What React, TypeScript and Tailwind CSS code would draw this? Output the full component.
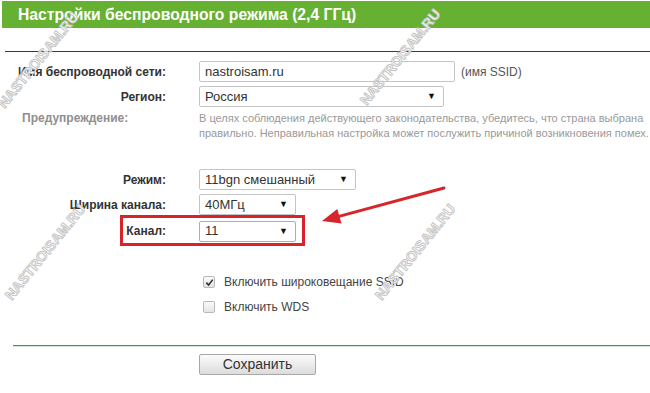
import React from "react";

function Select({ value, w, focus }: { value: string; w: string; focus?: boolean }) {
  return (
    <div
      className={`${w} h-[21px] flex items-center justify-between bg-white border rounded-[2px] pl-[5px] pr-[7px] text-[13px] text-[#333] ${
        focus ? "border-[#8fb3dd]" : "border-[#c4c4c4]"
      }`}
    >
      <span>{value}</span>
      <span className="text-[9px] text-[#111] leading-none">▼</span>
    </div>
  );
}

function Row({ label, children, className = "" }: { label: string; children: React.ReactNode; className?: string }) {
  return (
    <div className={`flex items-center ${className}`}>
      <div className="w-[166px] shrink-0 text-right font-bold text-[12px] text-[#333] whitespace-nowrap">{label}</div>
      <div className="ml-[33px] flex items-center">{children}</div>
    </div>
  );
}

function Check({ checked, label, className = "" }: { checked?: boolean; label: string; className?: string }) {
  return (
    <div className={`flex items-center h-[20px] ${className}`}>
      <div className="ml-[203px] w-[12px] h-[12px] rounded-[2px] border border-[#b9b9b9] bg-gradient-to-b from-[#fafafa] to-[#e4e4e4] flex items-center justify-center">
        {checked && (
          <svg width="9" height="9" viewBox="0 0 10 10">
            <path d="M1.5 5.2 L4 7.8 L8.6 1.8" fill="none" stroke="#333" strokeWidth="1.8" />
          </svg>
        )}
      </div>
      <span className="ml-[9px] text-[12px] text-[#444]">{label}</span>
    </div>
  );
}

function Watermark({ x, y }: { x: number; y: number }) {
  return (
    <div
      className="absolute -translate-x-1/2 -translate-y-1/2 -rotate-[51deg] whitespace-nowrap font-bold text-[14px] leading-none text-white [-webkit-text-stroke:1px_#c6c6c6] pointer-events-none"
      style={{ left: x, top: y }}
    >
      NASTROISAM.RU
    </div>
  );
}

export default function App() {
  return (
    <div className="relative w-[650px] h-[393px] overflow-hidden bg-white font-['Liberation_Sans',Arial,sans-serif]">
      <div className="ml-[2px] mt-px h-[27px] bg-[#66b032] flex items-center pl-[16px] text-white font-bold text-[15.7px]">
        Настройки беспроводного режима (2,4 ГГц)
      </div>
      <div className="ml-[5px] mt-[23px] h-px bg-[#2f4237]"></div>

      <Row label="Имя беспроводной сети:" className="mt-[9px] h-[21px]">
        <div className="w-[256px] h-[21px] flex items-center bg-white border border-[#c4c4c4] rounded-[2px] pl-[5px] text-[13px] text-[#333]">
          nastroisam.ru
        </div>
        <span className="ml-[6px] text-[12px] text-[#555]">(имя SSID)</span>
      </Row>
      <Row label="Регион:" className="mt-[4px] h-[21px]">
        <Select value="Россия" w="w-[245px]" />
      </Row>
      <div className="flex mt-[4px] leading-[15px]">
        <div className="w-[199px] shrink-0 pl-[22px] font-bold text-[12px] text-[#8f8f8f]">Предупреждение:</div>
        <div className="text-[#999] whitespace-nowrap text-[11px]">
          В целях соблюдения действующего законодательства, убедитесь, что страна выбрана
          <br />
          правильно. Неправильная настройка может послужить причиной возникновения помех.
        </div>
      </div>

      <Row label="Режим:" className="mt-[28px] h-[21px]">
        <Select value="11bgn смешанный" w="w-[157px]" />
      </Row>
      <Row label="Ширина канала:" className="mt-[4px] h-[21px]">
        <Select value="40МГц" w="w-[97px]" />
      </Row>
      <Row label="Канал:" className="mt-[5px] h-[22px]">
        <div className="h-[22px] flex items-center">
          <Select value="11" w="w-[97px]" focus />
        </div>
      </Row>

      <Check checked label="Включить широковещание SSID" className="mt-[30px]" />
      <Check label="Включить WDS" className="mt-[5px]" />

      <div className="ml-[13px] mt-[28px] h-px bg-[#4a8a5d]"></div>
      <div className="ml-[13px] h-px bg-[#d3ecd9]"></div>

      <div className="ml-[199px] mt-[7px] w-[117px] h-[21px] flex items-center justify-center border border-[#a8a8a8] rounded-[2px] bg-gradient-to-b from-[#fbfbfb] to-[#dcdcdc] text-[14px] text-[#333]">
        Сохранить
      </div>

      {/* annotation: red frame */}
      <div className="absolute left-[120px] top-[215px] w-[185px] h-[31px] border-[3px] border-[#d8232a]"></div>

      {/* annotation: red arrow */}
      <svg className="absolute left-0 top-0" width="650" height="393" viewBox="0 0 650 393">
        <line x1="444" y1="188" x2="338" y2="216.6" stroke="#d6262b" strokeWidth="3" strokeLinecap="round" />
        <polygon points="322,221 341.5,223.5 337.3,209" fill="#d6262b" />
      </svg>

      <Watermark x={38} y={60} />
      <Watermark x={400} y={57} />
      <Watermark x={45} y={252} />
      <Watermark x={415} y={252} />
    </div>
  );
}
